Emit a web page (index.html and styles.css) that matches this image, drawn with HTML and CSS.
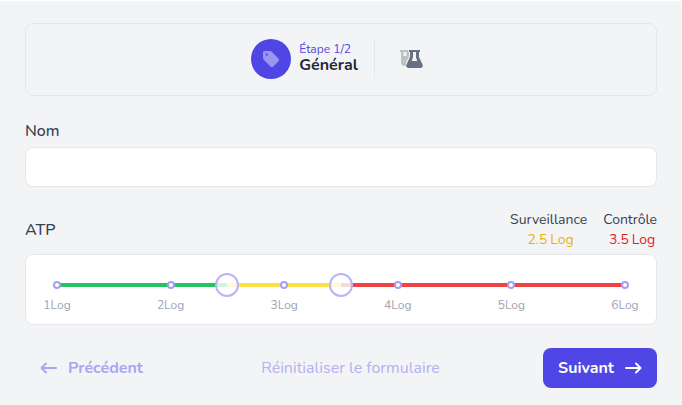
FILE: index.html
```html
<!DOCTYPE html>
<html lang="fr">
<head>
<meta charset="utf-8">
<meta name="viewport" content="width=device-width, initial-scale=1">
<title>Général</title>
<link rel="stylesheet" href="styles.css">
</head>
<body>
<form class="form">
  <nav class="steps">
    <div class="step">
      <span class="step-badge">
        <svg width="18" height="18" viewBox="0 0 18 18" aria-hidden="true"><path fill="currentColor" fill-rule="evenodd" d="M1 2.600C1 1.700 1.700 1 2.600 1H8c.6 0 1.100.2 1.500.6l6.900 6.900c.8.8.8 2 0 2.800l-5.100 5.100c-.8.8-2 .8-2.800 0L1.600 9.500C1.200 9.100 1 8.600 1 8zM4.700 3.600a1.100 1.100 0 1 0 0 2.200 1.100 1.100 0 0 0 0-2.200z"/></svg>
      </span>
      <div class="step-text">
        <span class="step-count">Étape 1/2</span>
        <strong class="step-title">Général</strong>
      </div>
    </div>
    <div class="step-next">
      <svg width="24" height="20" viewBox="0 0 24 20" aria-hidden="true">
        <path fill="#bcc1c8" fill-rule="evenodd" d="M1 1h8v1.500h1V8L7.500 12.500 6.500 16.800C4 17.300 2 15.800 2 13.500V3H1zM4.500 3v4h3V3z"/>
        <path fill="#667080" fill-rule="evenodd" d="M10 1h11v2h-1v5l3.500 7.500c.8 1.700-.2 3.500-2 3.500H9.500c-1.800 0-2.800-1.800-2-3.500L11 8V3h-1zM14 3v5.500L12.700 12h5.600L17 8.500V3z"/>
      </svg>
    </div>
  </nav>

  <div class="field">
    <label class="label" for="nom">Nom</label>
    <input class="input" id="nom" type="text">
  </div>

  <div class="field">
    <div class="field-head">
      <span class="label" id="atp">ATP</span>
      <div class="readings">
        <div class="reading"><label for="surveillance">Surveillance</label><output class="value warn" for="surveillance">2.5&#8201;Log</output></div>
        <div class="reading"><label for="controle">Contrôle</label><output class="value alert" for="controle">3.5&#8201;Log</output></div>
      </div>
    </div>
    <div class="panel" role="group" aria-labelledby="atp">
      <div class="slider">
        <div class="track"></div>
        <ul class="ticks">
          <li class="tick">1Log</li>
          <li class="tick">2Log</li>
          <li class="tick">3Log</li>
          <li class="tick">4Log</li>
          <li class="tick">5Log</li>
          <li class="tick">6Log</li>
        </ul>
        <input class="range" id="surveillance" type="range" min="1" max="6" step="0.1" value="2.5">
        <input class="range" id="controle" type="range" min="1" max="6" step="0.1" value="3.5">
      </div>
    </div>
  </div>

  <div class="actions">
    <button class="button previous" type="button" disabled>
      <svg width="17" height="12" viewBox="0 0 17 12" aria-hidden="true"><path d="M16 6H1.500M6 1.500 1.500 6 6 10.500"/></svg>
      Précédent
    </button>
    <button class="button reset" type="reset" disabled>Réinitialiser le formulaire</button>
    <button class="button next" type="submit">
      Suivant
      <svg width="17" height="12" viewBox="0 0 17 12" aria-hidden="true"><path d="M1 6h14.500M11 1.500 15.500 6 11 10.500"/></svg>
    </button>
  </div>
</form>
</body>
</html>
```
FILE: styles.css
```css
*,
*::before { box-sizing: border-box; }

body {
  margin: 0;
  border-top: 1px solid #fff;
  background: #f3f4f6;
  color: #374151;
  font: 16px/24px Nunito, Lato, sans-serif;
}

.form {
  display: grid;
  gap: 23px;
  padding: 22px 25px 17px;
}

.steps {
  display: flex;
  justify-content: center;
  padding: 15px 16px 16px;
  border: 1px solid #e5e7eb;
  border-radius: 8px;
}

.step {
  display: flex;
  align-items: center;
  gap: 8px;
  padding-right: 16px;
  border-right: 1px solid #e5e7eb;
}

.step-badge {
  display: grid;
  place-items: center;
  width: 40px;
  height: 40px;
  border-radius: 50%;
  background: #4f46e5;
  color: #9a95f1;
}

.step-text {
  display: grid;
  padding-bottom: 4px;
  line-height: 16px;
}

.step-count {
  color: #4f46e5;
  font-size: 12px;
}

.step-title {
  color: #1f2937;
  font-weight: 700;
}

.step-next {
  display: grid;
  place-items: center;
  width: 40px;
  margin-left: 16px;
}

.label { font-weight: 500; }

.field {
  display: grid;
  gap: 4px;
}

.input {
  width: 100%;
  height: 40px;
  padding: 0 12px;
  border: 1px solid #e5e7eb;
  border-radius: 8px;
  background: #fff;
  font: inherit;
}

.field-head {
  display: flex;
  align-items: center;
  justify-content: space-between;
}

.readings {
  display: flex;
  gap: 16px;
  font-size: 14px;
  line-height: 20px;
}

.reading {
  display: grid;
  justify-items: center;
}

.value { padding-left: 4px; }
.warn { color: #eab308; }
.alert { color: #dc2626; }

.panel {
  padding: 18px 19px 11px;
  border: 1px solid #e5e7eb;
  border-radius: 8px;
  background: #fff;
}

.slider {
  position: relative;
  padding: 8px 8px 0;
}

.track {
  height: 4px;
  margin: 2px 4px -6px;
  background: linear-gradient(to right, #22c55e 30%, #fde047 30% 50%, #ef4444 50%);
}

.ticks {
  display: flex;
  justify-content: space-between;
  margin: 0;
  padding: 0;
  list-style: none;
}

.tick {
  display: flex;
  flex-direction: column;
  align-items: center;
  gap: 8px;
  width: 8px;
  color: #9ca3af;
  font-size: 12px;
  line-height: 16px;
  white-space: nowrap;
}

.tick::before {
  content: "";
  width: 8px;
  height: 8px;
  border: 2px solid #a5a0f2;
  border-radius: 50%;
  background: #fff;
}

.range {
  position: absolute;
  top: 0;
  left: 0;
  width: 100%;
  height: 24px;
  margin: 0;
  appearance: none;
  background: none;
  pointer-events: none;
}

.range::-webkit-slider-thumb {
  appearance: none;
  width: 24px;
  height: 24px;
  border: 2px solid #b9b5f5;
  border-radius: 50%;
  background: rgb(255 255 255 / 80%);
  pointer-events: auto;
}

.actions {
  display: flex;
  align-items: center;
  justify-content: space-between;
}

.button {
  display: flex;
  align-items: center;
  gap: 11px;
  height: 40px;
  padding: 0 15px;
  border: 0;
  border-radius: 8px;
  background: none;
  color: #4f46e5;
  font: inherit;
  font-weight: 700;
}

.button svg {
  fill: none;
  stroke: currentColor;
  stroke-width: 2;
  stroke-linecap: round;
  stroke-linejoin: round;
}

.previous { color: #aaa5f0; }

.reset {
  color: #b5b1f2;
  font-weight: 400;
}

.next {
  background: #4f46e5;
  color: #fff;
}
```
